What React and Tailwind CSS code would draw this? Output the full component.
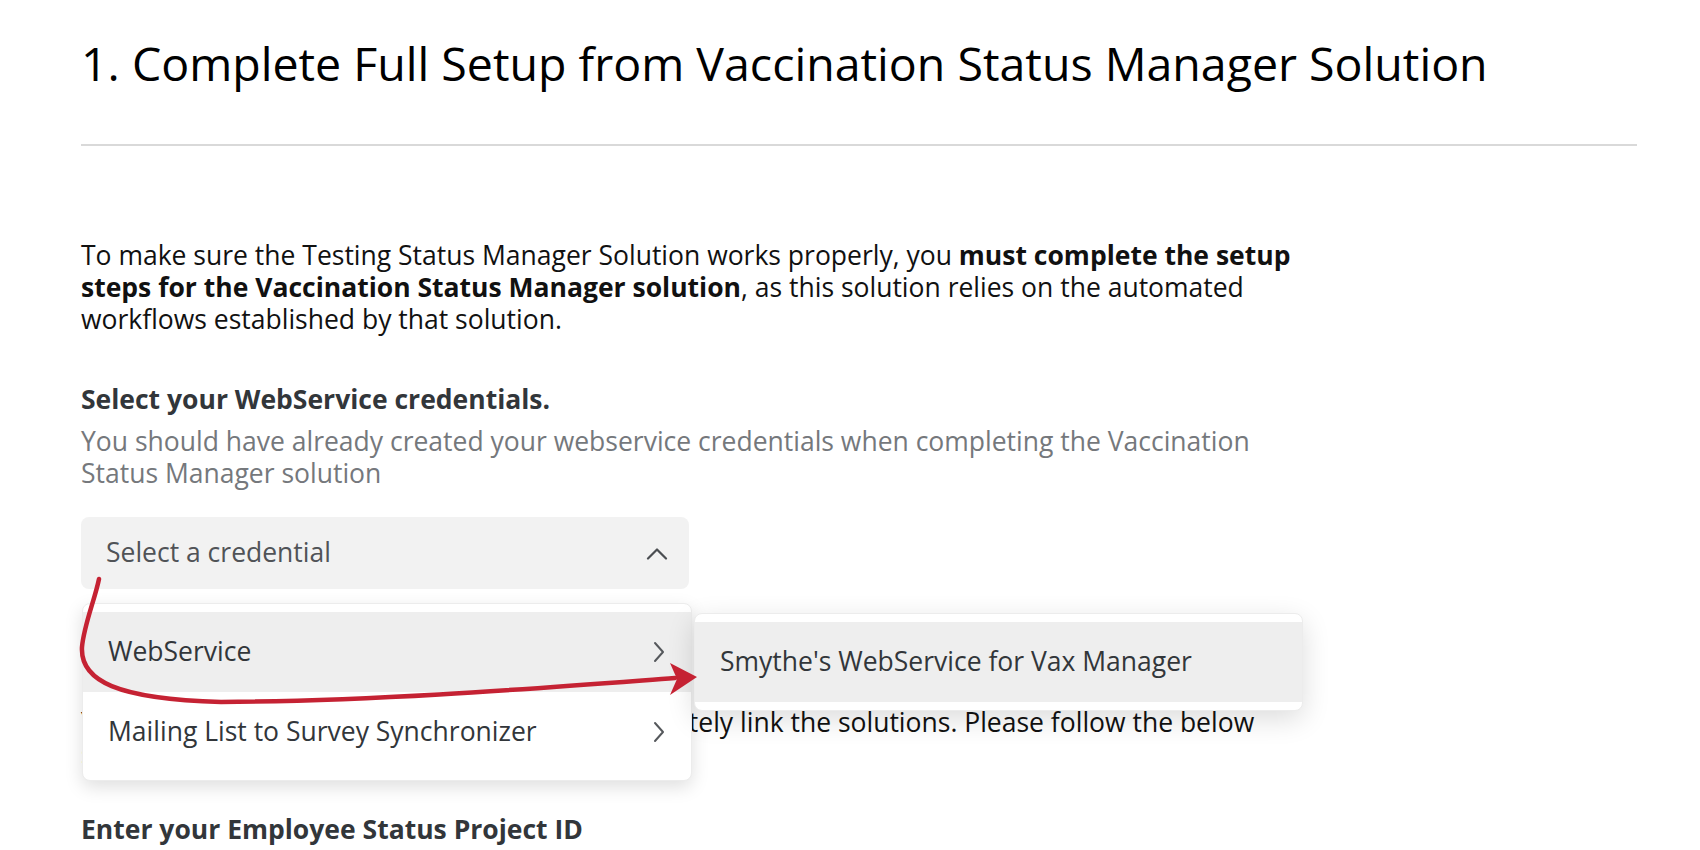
import React from 'react';

const FONT = { fontFamily: '"Open Sans", "Noto Sans", sans-serif' };

function ChevronUp() {
  return (
    <svg width="22" height="13" viewBox="0 0 22 13" fill="none">
      <path d="M2 11.5 L11 2.5 L20 11.5" stroke="#4b4e52" strokeWidth="2.2" strokeLinecap="round" strokeLinejoin="round" />
    </svg>
  );
}

function ChevronRight() {
  return (
    <svg width="12" height="22" viewBox="0 0 12 22" fill="none">
      <path d="M2 2 L10 11 L2 20" stroke="#55585c" strokeWidth="2" strokeLinecap="round" strokeLinejoin="round" />
    </svg>
  );
}

export default function App() {
  return (
    <div className="min-h-[850px] bg-white pl-[81px] pr-[63px] pt-[35px]" style={FONT}>
      <h1 className="text-[46.5px] leading-[56px] text-black font-normal">
        1. Complete Full Setup from Vaccination Status Manager Solution
      </h1>

      <div className="mt-[53px] h-[2px] bg-[#d9d9d9]" />

      <p className="mt-[93px] max-w-[1240px] text-[26.5px] leading-[32px] text-[#111]">
        To make sure the Testing Status Manager Solution works properly, you <b className="font-bold">must complete the setup steps for the Vaccination Status Manager solution</b>, as this solution relies on the automated workflows established by that solution.
      </p>

      <h3 className="mt-[48px] text-[26.5px] leading-[32px] font-bold text-[#32363a]">
        Select your WebService credentials.
      </h3>
      <p className="mt-[10px] max-w-[1240px] text-[26.5px] leading-[32px] text-[#75787c]">
        You should have already created your webservice credentials when completing the Vaccination Status Manager solution
      </p>

      <div className="relative mt-[28px] w-[608px]">
        {/* Select trigger */}
        <div className="flex h-[72px] items-center justify-between rounded-[8px] bg-[#f2f2f2] pl-[25px] pr-[21px]">
          <span className="text-[26.5px] text-[#505357]">Select a credential</span>
          <ChevronUp />
        </div>

        {/* Dropdown menu */}
        <div className="absolute left-[1px] top-[86px] z-10 w-[610px] rounded-[8px] border border-[#ececec] bg-white py-[8px] shadow-[0_6px_18px_rgba(0,0,0,0.13)]">
          <div className="flex h-[80px] items-center justify-between bg-[#eeeeee] pl-[25px] pr-[26px]">
            <span className="text-[26.5px] text-[#32363a]">WebService</span>
            <ChevronRight />
          </div>
          <div className="flex h-[80px] items-center justify-between pl-[25px] pr-[26px]">
            <span className="text-[26.5px] text-[#32363a]">Mailing List to Survey Synchronizer</span>
            <ChevronRight />
          </div>
        </div>

        {/* Submenu */}
        <div className="absolute left-[613px] top-[96px] z-10 w-[609px] rounded-[8px] border border-[#ececec] bg-white py-[8px] shadow-[0_8px_28px_rgba(0,0,0,0.14)]">
          <div className="flex h-[80px] items-center bg-[#eeeeee] pl-[25px]">
            <span className="text-[26.5px] text-[#32363a]">Smythe's WebService for Vax Manager</span>
          </div>
        </div>

        {/* Hand-drawn red arrow */}
        <svg className="absolute left-0 top-0 z-20 overflow-visible" width="620" height="200" viewBox="0 0 620 200" fill="none">
          <path
            d="M18 62 C 14 82, 3 108, 1 130 C -1 164, 36 182, 140 185 C 300 184, 460 171, 594 161"
            stroke="#c52233"
            strokeWidth="4.5"
            strokeLinecap="round"
          />
          <path d="M616 160 L589 146 L596 162 L589 178 Z" fill="#c52233" />
        </svg>
      </div>

      <p className="mt-[117px] text-[26.5px] leading-[32px] text-[#111]">
        You will need your project's ID in order to completely link the solutions. Please follow the below
        <br />
        steps to find it.
      </p>

      <h3 className="mt-[43px] text-[26.5px] leading-[32px] font-bold text-[#32363a]">
        Enter your Employee Status Project ID
      </h3>
    </div>
  );
}
